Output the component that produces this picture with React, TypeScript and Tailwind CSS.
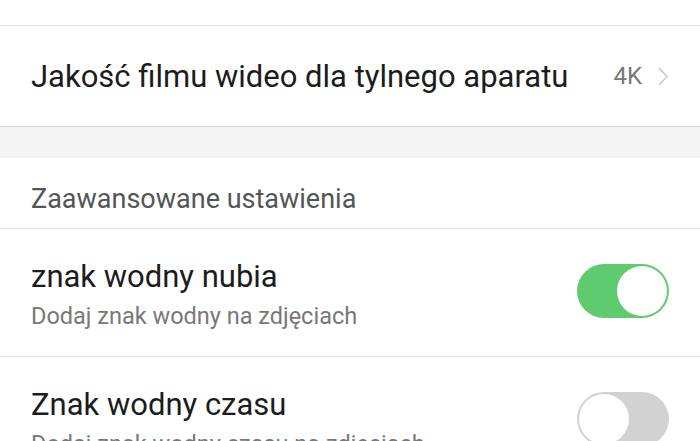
import React from 'react';

function Toggle({ on }: { on: boolean }) {
  return (
    <div
      className={`relative w-[92px] h-[54px] rounded-full shrink-0 ${on ? 'bg-[#5ecb6f]' : 'bg-[#d2d2d2]'}`}
    >
      <div
        className={`absolute top-[2px] w-[50px] h-[50px] rounded-full bg-white ${on ? 'right-[2px]' : 'left-[2px]'}`}
      />
    </div>
  );
}

function SwitchRow({ title, subtitle, on }: { title: string; subtitle: string; on: boolean }) {
  return (
    <div className="flex justify-between h-[128px] border-b border-[#e6e6e6] pl-[31px] pr-[31px]">
      <div className="pt-[32px]">
        <div className="text-[31px] leading-none text-[#1c1c1c]">{title}</div>
        <div className="mt-[13px] text-[23.5px] leading-none text-[#787878]">{subtitle}</div>
      </div>
      <div className="pt-[35px]">
        <Toggle on={on} />
      </div>
    </div>
  );
}

export default function App() {
  return (
    <div className="w-[700px] h-[441px] overflow-hidden bg-white" style={{ fontFamily: 'Roboto, "Noto Sans", sans-serif' }}>
      <div className="h-[26px] border-b border-[#e6e6e6]" />

      <div className="flex items-center justify-between h-[101px] border-b border-[#d4d4d4] pl-[31px] pr-[32px]">
        <span className="text-[31px] leading-none text-[#1c1c1c]">Jakość filmu wideo dla tylnego aparatu</span>
        <div className="flex items-center gap-[16px]">
          <span className="text-[24px] leading-none text-[#777777]">4K</span>
          <svg width="10" height="19" viewBox="0 0 10 19" fill="none">
            <polyline points="1,1 9,9.5 1,18" stroke="#c6c6c6" strokeWidth="1.5" />
          </svg>
        </div>
      </div>

      <div className="h-[31px] bg-[#f4f4f4]" />

      <div className="h-[71px] border-b border-[#e6e6e6] pl-[31px] pt-[28px]">
        <div className="text-[27px] leading-none text-[#555555]">Zaawansowane ustawienia</div>
      </div>

      <SwitchRow title="znak wodny nubia" subtitle="Dodaj znak wodny na zdjęciach" on={true} />
      <SwitchRow title="Znak wodny czasu" subtitle="Dodaj znak wodny czasu na zdjęciach" on={false} />
    </div>
  );
}
